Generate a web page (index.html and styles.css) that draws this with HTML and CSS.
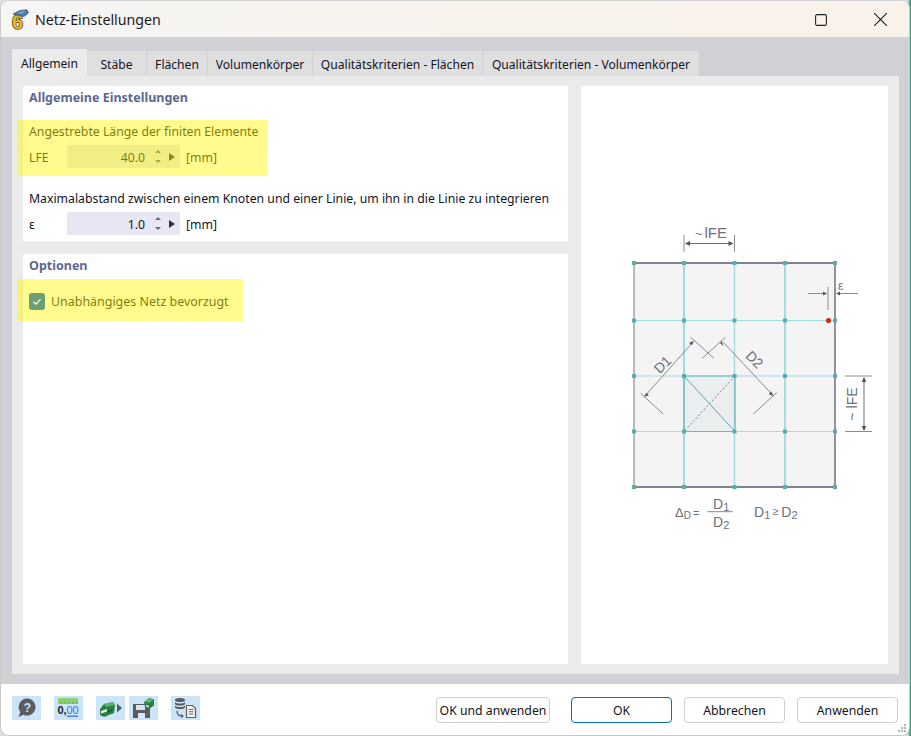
FILE: index.html
```html
<!DOCTYPE html>
<html lang="de">
<head>
<meta charset="utf-8">
<title>Netz-Einstellungen</title>
<link rel="stylesheet" href="styles.css">
</head>
<body>
<div class="window">
  <header class="titlebar">
    <svg class="logo" viewBox="0 0 21 21" aria-hidden="true">
      <text x="3" y="19.500" class="logo-six">6</text>
      <path d="M4 5 L11 1.500 L18 0.800 L19.500 4 L15 7.500 L9 6.500 Z" fill="#4f78a8" stroke="#39557c" stroke-width=".7"/>
      <path d="M8 4.500 L12 2.500 L16.500 2 L13 4.800 Z" fill="#86a8d0"/>
    </svg>
    <span class="title">Netz-Einstellungen</span>
    <div class="winctl">
      <svg class="winbtn" viewBox="0 0 12 12" aria-hidden="true"><rect x=".6" y=".6" width="10.8" height="10.8" rx="1.5" fill="none" stroke="#222" stroke-width="1.1"/></svg>
      <svg class="winbtn" viewBox="0 0 12 12" aria-hidden="true"><path d="M0 0 L12 12 M12 0 L0 12" stroke="#222" stroke-width="1.1"/></svg>
    </div>
  </header>

  <main class="body">
    <nav class="tabs">
      <div class="tab active">Allgemein</div>
      <div class="tab">Stäbe</div>
      <div class="tab">Flächen</div>
      <div class="tab">Volumenkörper</div>
      <div class="tab">Qualitätskriterien - Flächen</div>
      <div class="tab">Qualitätskriterien - Volumenkörper</div>
    </nav>
    <div class="sheet">
      <div class="leftcol">
        <section class="panel panel-general">
          <h2>Allgemeine Einstellungen</h2>
          <p class="label first">Angestrebte Länge der finiten Elemente</p>
          <div class="row">
            <span class="sym">LFE</span>
            <div class="input"><span class="val">40.0</span>
              <span class="spin"><i class="up"></i><i class="down"></i></span><i class="next"></i></div>
            <span class="unit">[mm]</span>
          </div>
          <p class="label second">Maximalabstand zwischen einem Knoten und einer Linie, um ihn in die Linie zu integrieren</p>
          <div class="row">
            <span class="sym">ε</span>
            <div class="input"><span class="val">1.0</span>
              <span class="spin"><i class="up"></i><i class="down"></i></span><i class="next"></i></div>
            <span class="unit">[mm]</span>
          </div>
          <div class="mark mark-a"></div>
        </section>
        <section class="panel panel-options">
          <h2>Optionen</h2>
          <label class="check">
            <span class="box"><svg viewBox="0 0 16 16" aria-hidden="true"><path d="M4.500 8.300 L7 10.600 L11.600 5.600" fill="none" stroke="#fff" stroke-width="1.200"/></svg></span>
            Unabhängiges Netz bevorzugt
          </label>
          <div class="mark mark-b"></div>
        </section>
      </div>
      <section class="panel panel-figure">
        <svg class="figure" viewBox="581 86 307 578" aria-label="Netz-Diagramm">
          <rect x="634" y="263" width="201" height="224" fill="#f4f4f4"/>
          <rect x="684" y="376" width="51" height="55.500" fill="#ebeeee"/>
          <g stroke="#a3dce0" fill="none">
            <path d="M684 263V487M785 263V487" stroke-width="2"/>
            <path d="M734.500 263V487" stroke-width="1.400"/>
            <path d="M634 320.500H835M634 376H835M634 431.500H835" stroke-width="1.200"/>
          </g>
          <path d="M634 263V487" stroke="#9d9da8" stroke-width="1.400"/>
          <path d="M634 263H835V487H634" stroke="#5c5c6a" stroke-width="1.300" fill="none"/>
          <path d="M684 376H735V431.500H684Z" stroke="#6db5bd" stroke-width="1.200" fill="none"/>
          <path d="M684 376L735 431.500" stroke="#5ba3ad" stroke-width="1"/>
          <path d="M735 376L684 431.500" stroke="#7c7c88" stroke-width="1" stroke-dasharray="2 2"/>
          <g fill="#5aabb2">
            <rect x="632" y="261" width="4" height="4"/><rect x="682" y="261" width="4" height="4"/><rect x="732.500" y="261" width="4" height="4"/><rect x="783" y="261" width="4" height="4"/><rect x="833" y="261" width="4" height="4"/>
            <rect x="632" y="318.500" width="4" height="4"/><rect x="682" y="318.500" width="4" height="4"/><rect x="732.500" y="318.500" width="4" height="4"/><rect x="783" y="318.500" width="4" height="4"/><rect x="833" y="318.500" width="4" height="4"/>
            <rect x="632" y="374" width="4" height="4"/><rect x="682" y="374" width="4" height="4"/><rect x="732.500" y="374" width="4" height="4"/><rect x="783" y="374" width="4" height="4"/><rect x="833" y="374" width="4" height="4"/>
            <rect x="632" y="429.500" width="4" height="4"/><rect x="682" y="429.500" width="4" height="4"/><rect x="732.500" y="429.500" width="4" height="4"/><rect x="783" y="429.500" width="4" height="4"/><rect x="833" y="429.500" width="4" height="4"/>
            <rect x="632" y="485" width="4" height="4"/><rect x="682" y="485" width="4" height="4"/><rect x="732.500" y="485" width="4" height="4"/><rect x="783" y="485" width="4" height="4"/><rect x="833" y="485" width="4" height="4"/>
          </g>
          <circle cx="828.500" cy="320.500" r="2.600" fill="#c8300f"/>
          <g stroke="#8a8a94" stroke-width="1" fill="none">
            <path d="M684 235V252M734.500 235V252"/>
            <path d="M686 243.500H733" stroke="#6c6c78"/>
            <path d="M808 293.500H826M837 293.500H858M828 287V310"/>
            <path d="M845 376H872M845 431.500H872"/>
            <path d="M864 378V430" stroke="#6c6c78"/>
            <path d="M693 342L645 396M722.700 341.700L772.700 395"/>
            <path d="M690.700 337.300L714 358.300M725.300 337.300L702.300 358.300M640.700 393.300L663.300 414M776.700 392.700L753.300 414"/>
          </g>
          <g fill="#55555f">
            <path d="M685 243.500l5-2.500v5zM733.500 243.500l-5-2.500v5z"/>
            <path d="M827 293.500l-4-2v4zM836 293.500l4-2v4z"/>
            <path d="M864 377l-2.300 5h4.600zM864 431l-2.300-5h4.600z"/>
            <path d="M694 341l-5 1.800 2.800 2.500zM721.700 341l1.600 5-3.200-2.700zM644 397l5-1.800-2.800-2.500zM773.700 396l-5-1.800 2.500-2.800z"/>
          </g>
          <g class="figtext">
            <text x="695" y="238" class="f13">~</text>
            <text x="704.500" y="238" class="f15">lFE</text>
            <text x="838" y="290" class="f12">ε</text>
            <text transform="translate(666 368) rotate(-45)" class="f14" text-anchor="middle">D1</text>
            <text transform="translate(751 363) rotate(45)" class="f14" text-anchor="middle">D2</text>
            <text transform="translate(857 404) rotate(-90)" class="f14" text-anchor="middle">~ lFE</text>
            <text x="675" y="517" class="f13">Δ<tspan class="f10" dy="2">D</tspan><tspan dx="2" dy="-2" class="f11">=</tspan></text>
            <text x="713" y="509" class="f14">D<tspan class="f11" dy="2">1</tspan></text>
            <text x="713" y="527" class="f14">D<tspan class="f11" dy="2">2</tspan></text>
            <text x="754" y="517" class="f14">D<tspan class="f11" dy="2">1</tspan><tspan dx="2" dy="-4" class="f11">≥</tspan><tspan dx="3" dy="2">D</tspan><tspan class="f11" dy="2">2</tspan></text>
          </g>
          <path d="M707.300 511.700H732.700" stroke="#8a8a94" stroke-width="1"/>
        </svg>
      </section>
    </div>
  </main>

  <footer class="footer">
    <div class="tools">
      <span class="tool"><svg viewBox="0 0 29 24" aria-hidden="true"><path d="M15 2.500a8.500 8.500 0 1 1-3.600 16.200L6.500 21l1.800-5.100A8.500 8.500 0 0 1 15 2.500z" fill="#5b5b60"/><text x="15.500" y="15.500" text-anchor="middle" class="tool-q">?</text></svg></span>
      <span class="tool"><svg viewBox="0 0 29 24" aria-hidden="true"><rect x="4" y="2" width="20" height="6" fill="#8fd070"/><path d="M7 5.500V8M11 5.500V8M15 5.500V8M19 5.500V8M23 5.500V8" stroke="#5a9a50" stroke-width=".8"/><text x="3.500" y="18" class="tool-n">0,</text><text x="12.500" y="18" class="tool-n tool-blue">00</text><rect x="13" y="19.500" width="11" height="1.500" fill="#4f7fe0"/></svg></span>
      <span class="tool"><svg viewBox="0 0 29 24" aria-hidden="true"><path d="M4 13L8 8l9-2 2 3-1 8-10 4-4-2z" fill="#2a7f42"/><path d="M8 8l9-2 2 3-9 2z" fill="#58b56e"/><path d="M5 15l6-2v2.500l-6 2z" fill="#e8f3ea"/><path d="M11 15l5-2v2l-5 2z" fill="#1f5f32"/><path d="M21 7.500l5 4.500-5 4.500z" fill="#5b5b60"/></svg></span>
      <span class="tool"><svg viewBox="0 0 29 24" aria-hidden="true"><path d="M4 8h13l4 3v11H4z" fill="#5b5b60"/><rect x="7" y="9" width="9" height="5" fill="#d4e6f5"/><rect x="9" y="17" width="7" height="5" fill="#d4e6f5"/><path d="M15 6l5-4 5 1.500v6L20 13l-4-2z" fill="#2a7f42"/><path d="M16 5.500l4-3 4 1.500-4 3z" fill="#5fbb74"/><path d="M17 9l3 1v1.500l-3-1z" fill="#e8f3ea"/></svg></span>
      <span class="tool tool-gap"><svg viewBox="0 0 29 24" aria-hidden="true"><ellipse cx="9" cy="4" rx="5" ry="2" fill="#5b5b60"/><path d="M4 6c1 2 9 2 10 0v2c-1 2-9 2-10 0zM4 9.500c1 2 9 2 10 0v2c-1 2-9 2-10 0z" fill="#5b5b60"/><path d="M6 15c0 3 2 5 5 5" fill="none" stroke="#5b5b60" stroke-width="1.300"/><path d="M13 20l-3-2v4z" fill="#5b5b60"/><path d="M15.500 9.500h6l3 3v9h-9z" fill="#fff" stroke="#5b5b60" stroke-width="1.200"/><path d="M17.500 13.500h5M17.500 15.800h5M17.500 18.100h5" stroke="#5b5b60" stroke-width="1"/></svg></span>
    </div>
    <div class="actions">
      <button class="btn btn-wide">OK und anwenden</button>
      <button class="btn btn-primary">OK</button>
      <button class="btn">Abbrechen</button>
      <button class="btn">Anwenden</button>
    </div>
    <svg class="grip" viewBox="0 0 10 10" aria-hidden="true"><g fill="#b5b5b5"><rect x="7" y="1" width="2" height="2"/><rect x="4" y="4" width="2" height="2"/><rect x="7" y="4" width="2" height="2"/><rect x="1" y="7" width="2" height="2"/><rect x="4" y="7" width="2" height="2"/><rect x="7" y="7" width="2" height="2"/></g></svg>
  </footer>
</div>
</body>
</html>
```
FILE: styles.css
```css
* { box-sizing: border-box; }
html, body { margin: 0; padding: 0; height: 100%; }
body {
  background: linear-gradient(90deg, #dcdcdc 0, #dcdcdc 908px, #3a9a88 910px);
  font-family: "Noto Sans", "Open Sans", sans-serif;
  font-size: 12.25px;
  color: #14141e;
  overflow: hidden;
}
.window {
  position: relative;
  width: 910px;
  height: 736px;
  display: flex;
  flex-direction: column;
  border: 1px solid #c9c9c9;
  border-top-color: #d2d2d2;
  border-radius: 9px;
  overflow: hidden;
  background: #fff;
}
.titlebar {
  height: 36px;
  flex: none;
  display: flex;
  align-items: center;
  padding: 1px 0 0 8px;
  background: linear-gradient(90deg, #f5f5f4 0, #f8f3ee 45%, #f9f2ea 100%);
}
.logo { width: 21px; height: 21px; flex: none; overflow: visible; }
.logo-six {
  font: 700 20px "Liberation Sans", sans-serif;
  fill: #e6b824;
  stroke: #3f3f38;
  stroke-width: 1.4px;
  paint-order: stroke;
}
.title { margin-left: 5px; font-size: 14.2px; color: #1a1a1a; }
.winctl { margin-left: auto; display: flex; gap: 47px; padding-right: 22px; align-items: center; }
.winbtn { width: 12px; height: 12px; display: block; }
.winbtn:last-child { width: 13px; height: 13px; }

.body {
  flex: none;
  height: 647px;
  background: #d1d1d5;
  padding: 12px 10px 10px 11px;
  display: flex;
  flex-direction: column;
}
.tabs {
  display: grid;
  grid-template-columns: 75px 60px 61px 105px 170px 217px;
  height: 27px;
  flex: none;
  font-size: 12.1px;
}
.tab {
  margin: 2px 1px 0 0;
  background: #dfdfdf;
  text-align: center;
  line-height: 27px;
  white-space: nowrap;
}
.tab.active { margin: 0; background: #ebebeb; line-height: 30px; }
.sheet {
  flex: 1;
  background: #ebebeb;
  padding: 10px 11px;
  display: flex;
  gap: 13px;
}
.leftcol { width: 545px; flex: none; display: flex; flex-direction: column; gap: 13px; }
.panel { position: relative; background: #fff; }
.panel-general { height: 155px; padding: 3px 6px; }
.panel-options { flex: 1; padding: 3px 6px; }
.panel-figure { flex: 1; }
.figure { display: block; width: 100%; height: 100%; }
h2 {
  margin: 0;
  font-size: 12.5px;
  font-weight: 700;
  line-height: 18px;
  color: #5c6890;
}
.label { margin: 0; line-height: 18px; white-space: nowrap; }
.label.first { margin-top: 16px; }
.label.second { margin-top: 22px; }
.row { display: flex; align-items: center; height: 23px; margin-top: 4px; }
.sym { width: 38px; padding-top: 2px; }
.input {
  width: 113px;
  height: 23px;
  background: #e6e7f3;
  display: flex;
  align-items: center;
}
.val { width: 78px; text-align: right; padding-top: 2px; }
.spin { width: 8px; margin-left: 9px; display: flex; flex-direction: column; gap: 7px; align-items: center; }
.spin i { display: block; width: 0; height: 0; border-left: 3px solid transparent; border-right: 3px solid transparent; }
.up { border-bottom: 3px solid #6a6a74; }
.down { border-top: 3px solid #6a6a74; }
.next { display: block; margin-left: 7px; width: 0; height: 0; border-top: 4.5px solid transparent; border-bottom: 4.5px solid transparent; border-left: 6px solid #30303a; }
.unit { margin-left: 6px; padding-top: 2px; }
.check { display: flex; align-items: center; margin-top: 17px; height: 18px; gap: 6px; font-size: 12.45px; }
.box { position: relative; z-index: 1; width: 16px; height: 17px; border-radius: 3px; background: #6d9f72; display: block; }
.box svg { display: block; width: 16px; height: 17px; }
.mark { position: absolute; background: rgba(255, 247, 0, .45); pointer-events: none; }
.mark-a { left: -6px; top: 34px; width: 251px; height: 56px; }
.mark-b { left: -6px; top: 25px; width: 226px; height: 42px; }

.figtext text { fill: #6e7078; font-family: "Liberation Sans", sans-serif; }
.f13 { font-size: 13px; }
.f14 { font-size: 14px; }
.f15 { font-size: 15px; }
.f12 { font-size: 12px; }
.f11 { font-size: 11px; }
.f10 { font-size: 10px; }

.footer {
  position: relative;
  flex: 1;
  background: #fff;
  display: flex;
  align-items: flex-start;
  padding: 12px 11px 0 11px;
}
.tools { display: flex; gap: 13px; }
.tool { width: 29px; height: 24px; background: #cce4f8; display: block; }
.tool svg { display: block; width: 29px; height: 24px; }
.tool:nth-child(4) { margin-left: -9px; }
.tool-gap { margin-left: 0; }
.tool-q { font: 700 12px "Liberation Sans", sans-serif; fill: #cce4f8; }
.tool-n { font: 700 11px "Liberation Sans", sans-serif; fill: #1b1b1b; }
.tool-blue { fill: #3f6fd8; font-weight: 400; }
.actions { margin-left: auto; display: flex; gap: 12px; padding-top: 1px; }
.btn {
  font: inherit;
  height: 26px;
  width: 101px;
  padding: 1px 0 0;
  background: #fff;
  border: 1px solid #cfcfcf;
  border-radius: 4px;
  color: #14141e;
}
.btn-wide { width: 114px; margin-right: 9px; }
.btn-primary { border-color: #0f6cbd; }
.grip { position: absolute; right: 2px; bottom: 2px; width: 10px; height: 10px; }
```
